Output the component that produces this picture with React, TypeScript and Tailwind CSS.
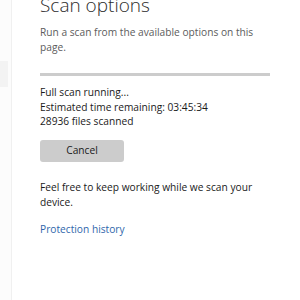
export default function App() {
  return (
    <div
      className="flex h-[300px] w-[300px] overflow-hidden bg-white"
      style={{ fontFamily: '"Open Sans", "Noto Sans", sans-serif' }}
    >
      <div className="flex w-[12px] shrink-0 flex-col border-r border-[#f0f0f0] bg-[#fcfcfc]">
        <div className="mt-[61px] h-[26px] w-[8px] bg-[#f3f3f3]" />
      </div>
      <div className="flex flex-1 flex-col pl-[28px] pr-[29px]">
        <h1 className="-mt-[7px] whitespace-nowrap text-[19px] font-light leading-[24px] text-[#2b2b2b]">Scan options</h1>
        <p className="mt-[8px] text-[10.2px] leading-[15px] text-[#5c5c5c]">
          Run a scan from the available options on this page.
        </p>
        <div className="mt-[18px] h-[3px] w-[230px] bg-[#cccccc]" />
        <div className="mt-[9px] text-[10.2px] leading-[14.5px] text-[#1a1a1a]">
          <div>Full scan running...</div>
          <div>Estimated time remaining: 03:45:34</div>
          <div>28936 files scanned</div>
        </div>
        <button className="mt-[11.5px] h-[22px] w-[84px] rounded-[3px] bg-[#cccccc] text-[10.2px] text-[#1a1a1a]">
          Cancel
        </button>
        <p className="mt-[18px] text-[10.2px] leading-[14.5px] text-[#1a1a1a]">
          Feel free to keep working while we scan your device.
        </p>
        <a className="mt-[13px] text-[10.2px] leading-[15px] text-[#2f66ab]">Protection history</a>
      </div>
    </div>
  )
}
